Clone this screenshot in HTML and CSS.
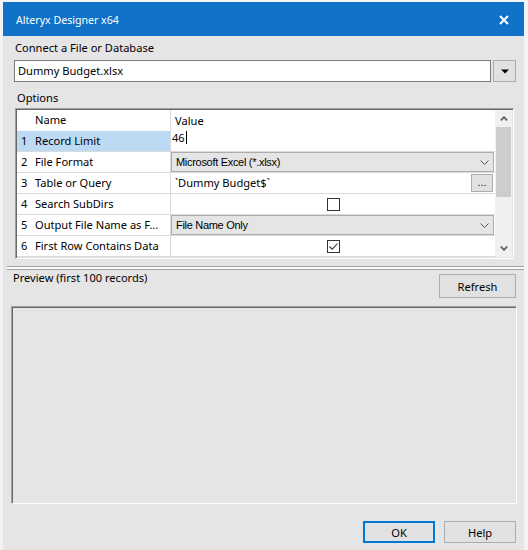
FILE: index.html
```html
<!DOCTYPE html>
<html>
<head>
<meta charset="utf-8">
<title>Alteryx Designer x64</title>
<link rel="stylesheet" href="styles.css">
</head>
<body>
<div class="window">
  <div class="titlebar">
    <span class="title">Alteryx Designer x64</span>
    <svg class="close" width="10" height="10" viewBox="0 0 10 10"><path d="M1 1L9 9M9 1L1 9" stroke="#fff" stroke-width="1.9"/></svg>
  </div>
  <div class="content">
    <div class="label">Connect a File or Database</div>
    <div class="connect">
      <div class="input">Dummy Budget.xlsx</div>
      <div class="ddbtn"><svg width="8" height="5" viewBox="0 0 8 5"><path d="M0 0.5H8L4 4.5Z" fill="#000"/></svg></div>
    </div>
    <div class="label options">Options</div>
    <div class="grid">
      <div class="table">
        <div class="row head"><div class="num"></div><div class="name">Name</div><div class="val"><span class="vtext">Value</span></div></div>
        <div class="row sel"><div class="num">1</div><div class="name">Record Limit</div><div class="val edit">46<span class="caret"></span></div></div>
        <div class="row"><div class="num">2</div><div class="name">File Format</div><div class="val"><div class="combo"><span>Microsoft Excel (*.xlsx)</span><svg class="chev" width="9" height="5" viewBox="0 0 9 5"><path d="M0.5 0.5L4.5 4.5L8.5 0.5" fill="none" stroke="#555" stroke-width="1"/></svg></div></div></div>
        <div class="row"><div class="num">3</div><div class="name">Table or Query</div><div class="val"><span class="vtext grow">`Dummy Budget$`</span><div class="dots">...</div></div></div>
        <div class="row"><div class="num">4</div><div class="name">Search SubDirs</div><div class="val center"><div class="check"></div></div></div>
        <div class="row"><div class="num">5</div><div class="name">Output File Name as F...</div><div class="val"><div class="combo"><span>File Name Only</span><svg class="chev" width="9" height="5" viewBox="0 0 9 5"><path d="M0.5 0.5L4.5 4.5L8.5 0.5" fill="none" stroke="#555" stroke-width="1"/></svg></div></div></div>
        <div class="row"><div class="num">6</div><div class="name">First Row Contains Data</div><div class="val center"><div class="check"><svg width="11" height="11" viewBox="0 0 11 11"><path d="M1.5 5.5L4.2 8.2L9.5 2.5" fill="none" stroke="#333" stroke-width="1.1"/></svg></div></div></div>
      </div>
      <div class="scrollbar">
        <div class="sarrow"><svg width="8" height="5" viewBox="0 0 8 5"><path d="M0.8 4.4L4 1.2L7.2 4.4" fill="none" stroke="#606060" stroke-width="1.8"/></svg></div>
        <div class="thumb"></div>
        <div class="track"></div>
        <div class="sarrow"><svg width="8" height="5" viewBox="0 0 8 5"><path d="M0.8 0.6L4 3.8L7.2 0.6" fill="none" stroke="#606060" stroke-width="1.8"/></svg></div>
      </div>
    </div>
    <div class="splitter"></div>
    <div class="preview-head">
      <span class="plabel">Preview (first 100 records)</span>
      <div class="btn refresh">Refresh</div>
    </div>
    <div class="preview"></div>
    <div class="footer">
      <div class="btn ok">OK</div>
      <div class="btn help">Help</div>
    </div>
  </div>
</div>
</body>
</html>
```
FILE: styles.css
```css
html, body {
  margin: 0;
  padding: 0;
  width: 528px;
  height: 550px;
  overflow: hidden;
  background: #f3f3f6;
  font-family: "Noto Sans", sans-serif;
  font-size: 11.1px;
  color: #000;
}

.window {
  margin: 2px 0 0 3px;
  width: 521px;
  height: 548px;
  background: #e5e5e5;
}

.titlebar {
  height: 34px;
  background: #0f71c7;
  display: flex;
  align-items: center;
  justify-content: space-between;
  color: #fff;
}

.title {
  padding-left: 13px;
  padding-top: 2px;
  font-size: 10.6px;
}

.close {
  margin-right: 15px;
  margin-top: 1px;
}

.content {
  padding: 4px 8px 0 11px;
}

.label {
  height: 16px;
  line-height: 16px;
  padding-left: 1px;
}

.label.options {
  margin-top: 8px;
  padding-left: 3px;
}

.connect {
  margin-top: 4px;
  display: flex;
  height: 22px;
}

.input {
  width: 477px;
  box-sizing: border-box;
  border: 1px solid #7a7a7a;
  background: #fff;
  line-height: 20px;
  padding-left: 3px;
}

.ddbtn {
  margin-left: 2px;
  width: 23px;
  box-sizing: border-box;
  border: 1px solid #adadad;
  background: #e1e1e1;
  display: flex;
  align-items: center;
  justify-content: center;
}

.grid {
  margin-top: 2px;
  margin-left: 1px;
  width: 499px;
  height: 151px;
  box-sizing: border-box;
  border-top: 1px solid #a0a0a0;
  border-left: 1px solid #a0a0a0;
  border-right: 1px solid #fff;
  border-bottom: 1px solid #fff;
  box-shadow: inset 1px 1px 0 #696969, inset -1px -1px 0 #e3e3e3;
  padding: 1px;
  display: flex;
  background: #fff;
}

.table {
  width: 478px;
}

.row {
  display: grid;
  grid-template-columns: 14px 139px 1fr;
  height: 21px;
  box-sizing: border-box;
  border-bottom: 1px solid #dadada;
  line-height: 20px;
}

.row.head {
  border-bottom: none;
}

.num {
  padding-left: 4px;
}

.name {
  padding-left: 4px;
  white-space: nowrap;
  overflow: hidden;
}

.sel .num, .sel .name {
  background: #bcdaf3;
}

.val {
  border-left: 1px solid #dadada;
  display: flex;
  align-items: center;
  min-width: 0;
}

.vtext {
  padding-left: 4px;
  white-space: nowrap;
}

.vtext.grow {
  flex: 1;
}

.val.edit {
  align-items: flex-start;
  line-height: 13px;
  padding-left: 1px;
  padding-top: 0px;
}

.caret {
  display: inline-block;
  width: 1px;
  height: 13px;
  background: #000;
  margin-left: 1px;
}

.combo {
  flex: 1;
  height: 20px;
  margin: 0 1px 0 0;
  box-sizing: border-box;
  border: 1px solid #adadad;
  background: #e5e5e5;
  display: flex;
  align-items: center;
  justify-content: space-between;
  padding-left: 4px;
  padding-right: 4px;
  font-family: "Liberation Sans", sans-serif;
  font-size: 11px;
  letter-spacing: -0.3px;
  align-self: flex-start;
}

.dots {
  width: 22px;
  height: 18px;
  box-sizing: border-box;
  border: 1px solid #adadad;
  background: #e1e1e1;
  margin-right: 2px;
  margin-top: -1px;
  font-family: "Liberation Sans", sans-serif;
  font-size: 11px;
  line-height: 14px;
  text-align: center;
  color: #1a1a50;
}

.val.center {
  justify-content: center;
}

.check {
  width: 13px;
  height: 13px;
  box-sizing: border-box;
  border: 1px solid #333;
  background: #fff;
  display: flex;
  align-items: center;
  justify-content: center;
}

.scrollbar {
  width: 17px;
  background: #f0f0f0;
  display: flex;
  flex-direction: column;
}

.sarrow {
  height: 17px;
  display: flex;
  align-items: center;
  justify-content: center;
}

.thumb {
  height: 70px;
  margin: 0 1px;
  background: #cdcdcd;
}

.track {
  flex: 1;
}

.splitter {
  margin: 7px -8px 0 -7px;
  height: 4px;
  box-sizing: border-box;
  border-top: 1px solid #a0a0a0;
  border-bottom: 1px solid #a0a0a0;
  background: #fafafa;
}

.preview-head {
  display: flex;
  justify-content: space-between;
  align-items: flex-start;
  height: 28px;
}

.plabel {
  line-height: 16px;
  margin-left: -1px;
}

.btn {
  box-sizing: border-box;
  border: 1px solid #adadad;
  background: #e1e1e1;
  display: flex;
  align-items: center;
  justify-content: center;
}

.refresh {
  margin-top: 4px;
  width: 77px;
  height: 24px;
}

.preview {
  margin-top: 8px;
  margin-left: -3px;
  width: 506px;
  height: 198px;
  box-sizing: border-box;
  border-top: 1px solid #a0a0a0;
  border-left: 1px solid #a0a0a0;
  border-right: 1px solid #fff;
  border-bottom: 1px solid #fff;
  box-shadow: inset 1px 1px 0 #696969;
}

.footer {
  margin-top: 17px;
  display: flex;
  justify-content: flex-end;
  gap: 9px;
}

.footer .btn {
  width: 72px;
  height: 22px;
}

.btn.ok {
  border: 2px solid #0078d7;
}
```
